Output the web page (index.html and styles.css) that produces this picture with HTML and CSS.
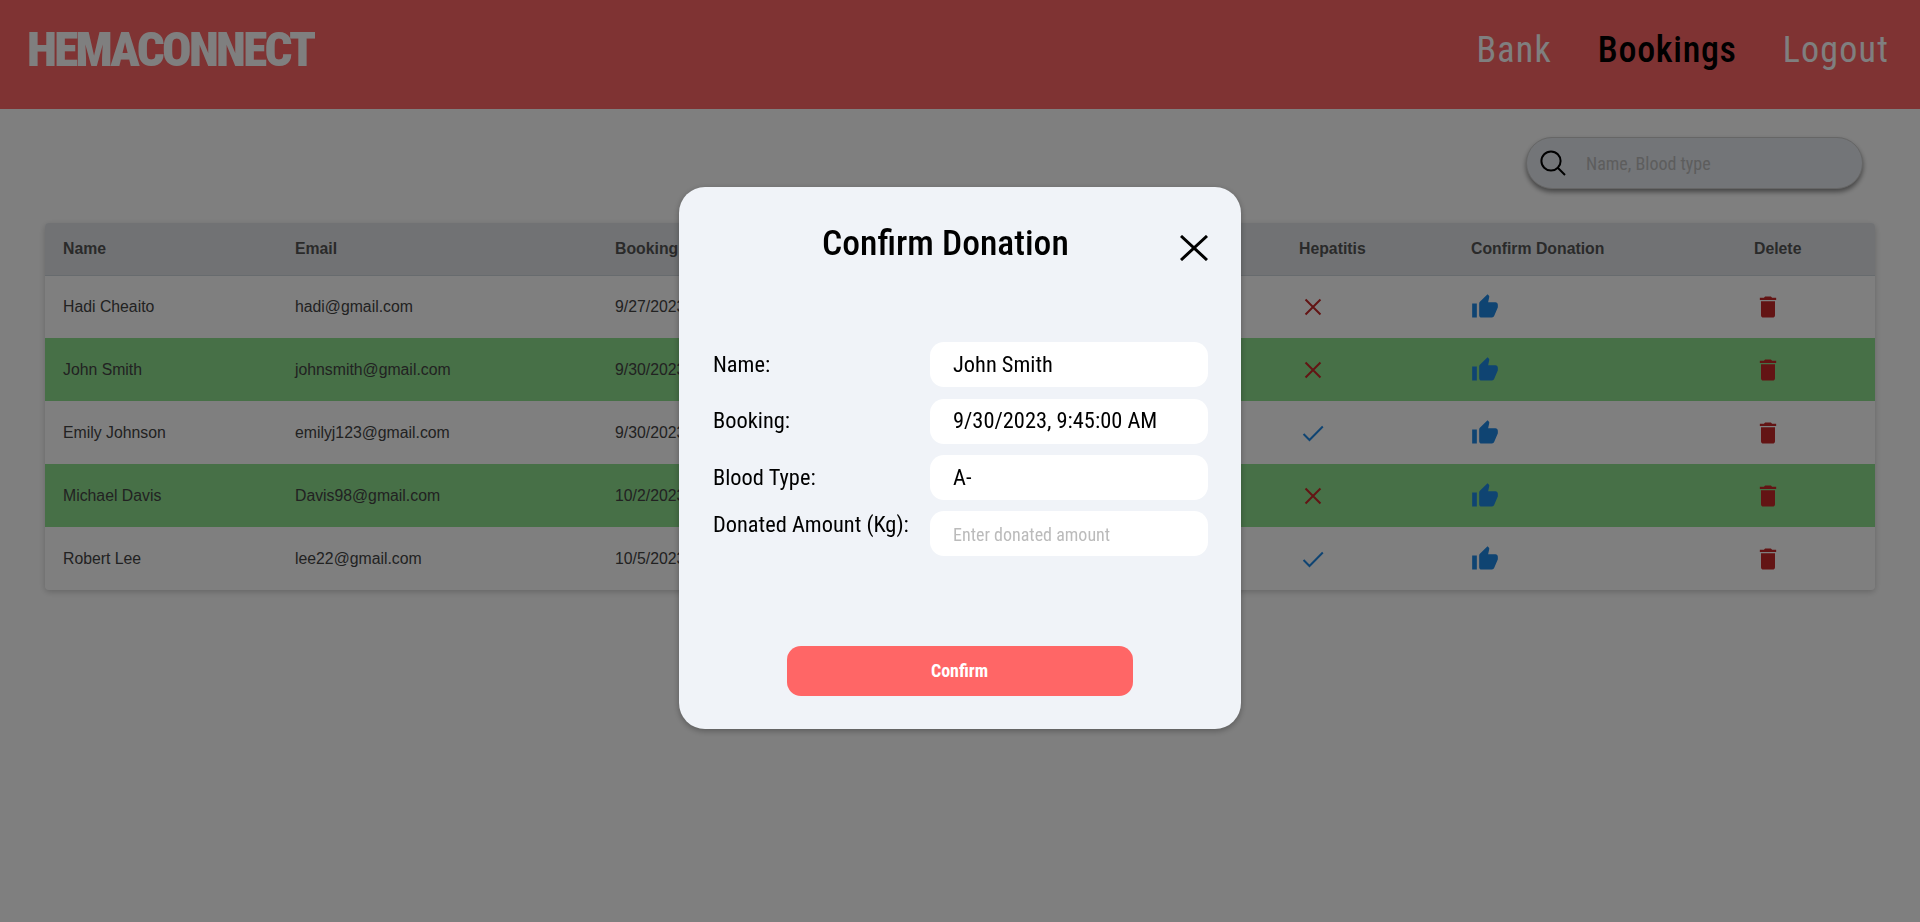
FILE: index.html

```html
<!DOCTYPE html>
<html lang="en">
<head>
<meta charset="utf-8"/>
<title>HemaConnect Bookings</title>
<link rel="stylesheet" href="styles.css">
</head>
<body>
<header class="navbar">
  <div class="logo">HEMACONNECT</div>
  <nav class="nav-links">
    <a href="#">Bank</a>
    <a href="#" class="active">Bookings</a>
    <a href="#">Logout</a>
  </nav>
</header>

<main class="content">
  <div class="search-row">
    <label class="search-box">
      <svg class="search-icon" viewBox="0 0 26 26"><circle cx="11" cy="11" r="9.6"/><path d="M18 18l7 7"/></svg>
      <input type="text" placeholder="Name, Blood type">
    </label>
  </div>

  <div class="table-card">
    <table>
      <colgroup>
        <col class="col-name"><col class="col-email"><col class="col-booking"><col class="col-hep"><col class="col-confirm"><col class="col-delete">
      </colgroup>
      <thead>
        <tr><th>Name</th><th>Email</th><th>Booking</th><th>Hepatitis</th><th>Confirm Donation</th><th>Delete</th></tr>
      </thead>
      <tbody>
        <tr>
          <td>Hadi Cheaito</td><td>hadi@gmail.com</td><td>9/27/2023</td>
          <td><svg class="icon icon-red" viewBox="0 0 24 24"><path class="thin" d="M5.6 5.6l12.8 12.8M18.4 5.6L5.6 18.4"/></svg></td>
          <td><svg class="icon icon-blue" viewBox="0 0 24 24"><path d="M1 21h4V9H1v12zm22-11c0-1.1-.9-2-2-2h-6.31l.95-4.57.03-.32c0-.41-.17-.79-.44-1.06L14.17 1 7.59 7.59C7.22 7.95 7 8.45 7 9v10c0 1.1.9 2 2 2h9c.83 0 1.54-.5 1.84-1.22l3.02-7.05c.09-.23.14-.47.14-.73v-2z"/></svg></td>
          <td><svg class="icon icon-red" viewBox="0 0 24 24"><path d="M6 19c0 1.1.9 2 2 2h8c1.1 0 2-.9 2-2V7H6v12zM19 4h-3.5l-1-1h-5l-1 1H5v2h14V4z"/></svg></td>
        </tr>
        <tr class="confirmed">
          <td>John Smith</td><td>johnsmith@gmail.com</td><td>9/30/2023</td>
          <td><svg class="icon icon-red" viewBox="0 0 24 24"><path class="thin" d="M5.6 5.6l12.8 12.8M18.4 5.6L5.6 18.4"/></svg></td>
          <td><svg class="icon icon-blue" viewBox="0 0 24 24"><path d="M1 21h4V9H1v12zm22-11c0-1.1-.9-2-2-2h-6.31l.95-4.57.03-.32c0-.41-.17-.79-.44-1.06L14.17 1 7.59 7.59C7.22 7.95 7 8.45 7 9v10c0 1.1.9 2 2 2h9c.83 0 1.54-.5 1.84-1.22l3.02-7.05c.09-.23.14-.47.14-.73v-2z"/></svg></td>
          <td><svg class="icon icon-red" viewBox="0 0 24 24"><path d="M6 19c0 1.1.9 2 2 2h8c1.1 0 2-.9 2-2V7H6v12zM19 4h-3.5l-1-1h-5l-1 1H5v2h14V4z"/></svg></td>
        </tr>
        <tr>
          <td>Emily Johnson</td><td>emilyj123@gmail.com</td><td>9/30/2023</td>
          <td><svg class="icon icon-blue" viewBox="0 0 24 24"><path class="thin" d="M3.9 12.8L9 18 20.4 6.4"/></svg></td>
          <td><svg class="icon icon-blue" viewBox="0 0 24 24"><path d="M1 21h4V9H1v12zm22-11c0-1.1-.9-2-2-2h-6.31l.95-4.57.03-.32c0-.41-.17-.79-.44-1.06L14.17 1 7.59 7.59C7.22 7.95 7 8.45 7 9v10c0 1.1.9 2 2 2h9c.83 0 1.54-.5 1.84-1.22l3.02-7.05c.09-.23.14-.47.14-.73v-2z"/></svg></td>
          <td><svg class="icon icon-red" viewBox="0 0 24 24"><path d="M6 19c0 1.1.9 2 2 2h8c1.1 0 2-.9 2-2V7H6v12zM19 4h-3.5l-1-1h-5l-1 1H5v2h14V4z"/></svg></td>
        </tr>
        <tr class="confirmed">
          <td>Michael Davis</td><td>Davis98@gmail.com</td><td>10/2/2023</td>
          <td><svg class="icon icon-red" viewBox="0 0 24 24"><path class="thin" d="M5.6 5.6l12.8 12.8M18.4 5.6L5.6 18.4"/></svg></td>
          <td><svg class="icon icon-blue" viewBox="0 0 24 24"><path d="M1 21h4V9H1v12zm22-11c0-1.1-.9-2-2-2h-6.31l.95-4.57.03-.32c0-.41-.17-.79-.44-1.06L14.17 1 7.59 7.59C7.22 7.95 7 8.45 7 9v10c0 1.1.9 2 2 2h9c.83 0 1.54-.5 1.84-1.22l3.02-7.05c.09-.23.14-.47.14-.73v-2z"/></svg></td>
          <td><svg class="icon icon-red" viewBox="0 0 24 24"><path d="M6 19c0 1.1.9 2 2 2h8c1.1 0 2-.9 2-2V7H6v12zM19 4h-3.5l-1-1h-5l-1 1H5v2h14V4z"/></svg></td>
        </tr>
        <tr>
          <td>Robert Lee</td><td>lee22@gmail.com</td><td>10/5/2023</td>
          <td><svg class="icon icon-blue" viewBox="0 0 24 24"><path class="thin" d="M3.9 12.8L9 18 20.4 6.4"/></svg></td>
          <td><svg class="icon icon-blue" viewBox="0 0 24 24"><path d="M1 21h4V9H1v12zm22-11c0-1.1-.9-2-2-2h-6.31l.95-4.57.03-.32c0-.41-.17-.79-.44-1.06L14.17 1 7.59 7.59C7.22 7.95 7 8.45 7 9v10c0 1.1.9 2 2 2h9c.83 0 1.54-.5 1.84-1.22l3.02-7.05c.09-.23.14-.47.14-.73v-2z"/></svg></td>
          <td><svg class="icon icon-red" viewBox="0 0 24 24"><path d="M6 19c0 1.1.9 2 2 2h8c1.1 0 2-.9 2-2V7H6v12zM19 4h-3.5l-1-1h-5l-1 1H5v2h14V4z"/></svg></td>
        </tr>
      </tbody>
    </table>
  </div>
</main>

<div class="overlay">
  <div class="modal">
    <div class="modal-head">
      <h2>Confirm Donation</h2>
      <button class="close-btn"><svg viewBox="0 0 28 26"><path d="M1 1l26 24M27 1L1 25"/></svg></button>
    </div>
    <div class="modal-form">
      <div class="form-row"><label>Name:</label><input type="text" value="John Smith"></div>
      <div class="form-row"><label>Booking:</label><input type="text" value="9/30/2023, 9:45:00 AM"></div>
      <div class="form-row"><label>Blood Type:</label><input type="text" value="A-"></div>
      <div class="form-row amount"><label>Donated Amount (Kg):</label><input type="text" placeholder="Enter donated amount"></div>
    </div>
    <button class="confirm-btn">Confirm</button>
  </div>
</div>
</body>
</html>
```

FILE: styles.css

```css
* {
  box-sizing: border-box;
}

body {
  margin: 0;
  min-height: 922px;
  background: white;
  font-family: "Roboto Condensed", "Liberation Sans Narrow", Roboto, sans-serif;
  font-stretch: condensed;
}

.navbar {
  height: 109px;
  background: #ff6666;
  display: flex;
  align-items: center;
  justify-content: space-between;
  padding: 0 31px 10px 27px;
}

.logo {
  font-family: Roboto, sans-serif;
  font-stretch: condensed;
  font-weight: 900;
  font-size: 49px;
  letter-spacing: -2.7px;
  color: white;
}

.nav-links {
  display: flex;
  gap: 46px;
}

.nav-links a {
  color: white;
  text-decoration: none;
  font-size: 36px;
  letter-spacing: 1.2px;
}

.nav-links a.active {
  color: black;
  font-weight: 500;
  letter-spacing: 0.7px;
}

.content {
  padding: 28px 45px 0;
}

.search-row {
  display: flex;
  justify-content: flex-end;
  margin-bottom: 34px;
}

.search-box {
  width: 337px;
  height: 52px;
  margin-right: 12px;
  border: 1px solid #ccc;
  border-radius: 26px;
  background: #e6eaf0;
  box-shadow: 0 3px 5px rgba(0, 0, 0, 0.45);
  display: flex;
  align-items: center;
  gap: 18px;
  padding: 0 14px 0 13px;
}

.search-icon {
  width: 26px;
  height: 26px;
  flex-shrink: 0;
  fill: none;
  stroke: black;
  stroke-width: 2;
}

.search-box input {
  flex: 1;
  min-width: 0;
  border: none;
  outline: none;
  background: transparent;
  font: inherit;
  font-size: 18px;
}

.search-box input::placeholder {
  color: #bbb;
}

.table-card {
  background: white;
  border-radius: 4px;
  box-shadow: 0 2px 6px rgba(0, 0, 0, 0.2);
  overflow: hidden;
}

table {
  width: 100%;
  border-collapse: collapse;
  table-layout: fixed;
  font-family: "Liberation Sans", Arial, sans-serif;
  font-stretch: normal;
  font-size: 15.8px;
}

.col-name { width: 232px; }
.col-email { width: 320px; }
.col-booking { width: 684px; }
.col-hep { width: 172px; }
.col-confirm { width: 283px; }
.col-delete { width: 139px; }

th, td {
  text-align: left;
  padding: 0 18px;
  color: #444;
}

th {
  height: 52px;
  background: #e2e5e9;
  border-bottom: 1px solid #cfd6dc;
  color: #555;
}

td {
  height: 63px;
}

tr.confirmed td {
  background: #8ee08e;
}

.icon {
  display: block;
  width: 28px;
  height: 28px;
}

.icon-red { fill: #c62828; }
.icon-blue { fill: #1e88e5; }
.icon .thin {
  fill: none;
  stroke-width: 1.7;
}
.icon-red .thin { stroke: #c62828; }
.icon-blue .thin { stroke: #1e88e5; }

.overlay {
  position: fixed;
  inset: 0;
  background: rgba(0, 0, 0, 0.5);
  display: flex;
  justify-content: center;
  align-items: flex-start;
  padding-top: 187px;
}

.modal {
  width: 562px;
  height: 542px;
  background: #f0f3f8;
  border-radius: 26px;
  box-shadow: 0 2px 6px rgba(0, 0, 0, 0.3);
  padding: 0 33px 33px 34px;
  display: flex;
  flex-direction: column;
}

.modal-head {
  height: 155.4px;
  display: flex;
  align-items: flex-start;
  justify-content: space-between;
  padding-left: 109px;
}

.modal-head h2 {
  margin: 35px 0 0;
  font-size: 35.6px;
  font-weight: 500;
  color: black;
}

.close-btn {
  border: none;
  background: transparent;
  padding: 0;
  margin-top: 48px;
  width: 28px;
  height: 26px;
}

.close-btn svg {
  display: block;
  width: 28px;
  height: 26px;
  fill: none;
  stroke: black;
  stroke-width: 3;
}

.modal-form {
  display: flex;
  flex-direction: column;
  gap: 11.33px;
  flex: 1;
}

.form-row {
  display: flex;
  align-items: center;
  justify-content: space-between;
  font-size: 22.4px;
  color: black;
}

.form-row label {
  padding-bottom: 2px;
}

.form-row.amount {
  align-items: flex-start;
}

.form-row input {
  width: 278px;
  height: 45px;
  border: none;
  outline: none;
  border-radius: 14px;
  background: white;
  padding: 0 23px 2px;
  font: inherit;
  font-size: 22.4px;
}

.form-row input::placeholder {
  font-size: 18px;
  color: #bbb;
}

.confirm-btn {
  align-self: center;
  width: 346px;
  height: 50px;
  margin-right: 2px;
  border: none;
  border-radius: 14px;
  background: #ff6666;
  color: white;
  font: inherit;
  font-weight: bold;
  font-size: 18px;
  padding-bottom: 3px;
}
```
